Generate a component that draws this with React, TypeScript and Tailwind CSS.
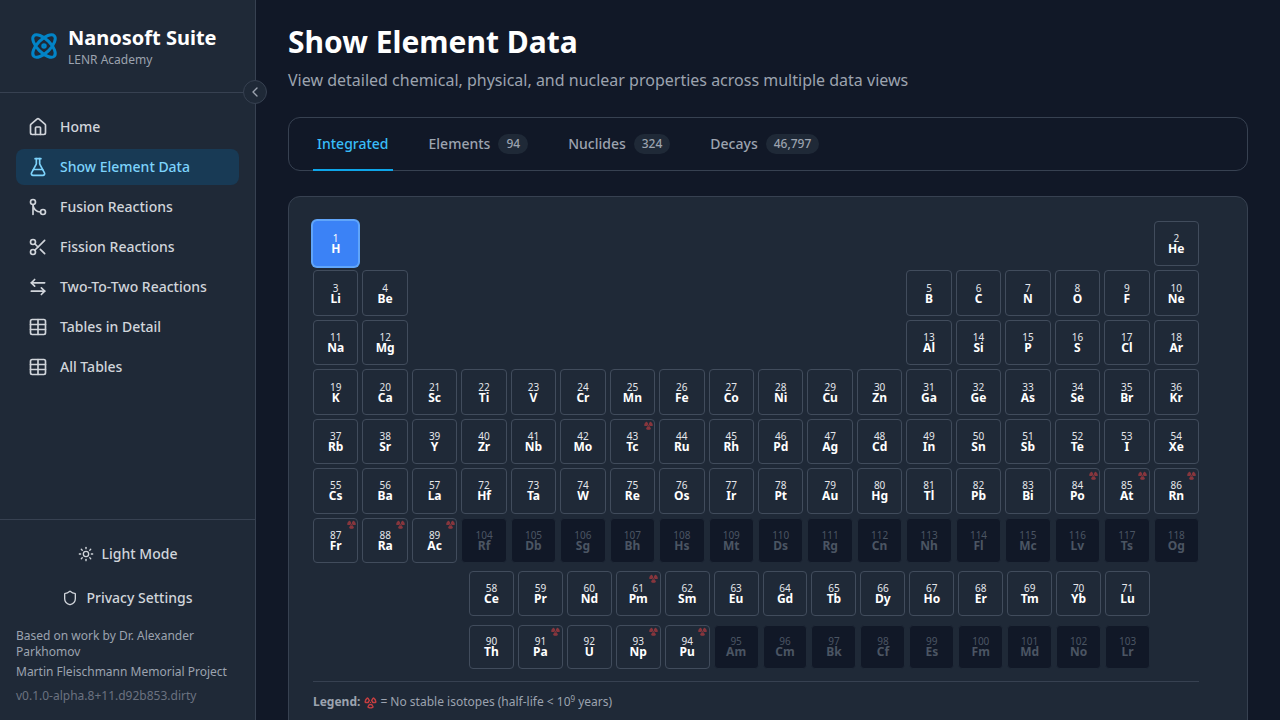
import { ChevronLeft, FlaskConical, GitMerge, House, ArrowLeftRight, Radiation, Scissors, Shield, Sun, Table, Atom } from "lucide-react";
import type { ReactNode } from "react";

const NAV = [
  { label: "Home", icon: House },
  { label: "Show Element Data", icon: FlaskConical, active: true },
  { label: "Fusion Reactions", icon: GitMerge },
  { label: "Fission Reactions", icon: Scissors },
  { label: "Two-To-Two Reactions", icon: ArrowLeftRight },
  { label: "Tables in Detail", icon: Table },
  { label: "All Tables", icon: Table },
];

const RADIOACTIVE = [43, 61, 84, 85, 86, 87, 88, 89, 91, 93, 94];

const SYMBOLS = "H He Li Be B C N O F Ne Na Mg Al Si P S Cl Ar K Ca Sc Ti V Cr Mn Fe Co Ni Cu Zn Ga Ge As Se Br Kr Rb Sr Y Zr Nb Mo Tc Ru Rh Pd Ag Cd In Sn Sb Te I Xe Cs Ba La Ce Pr Nd Pm Sm Eu Gd Tb Dy Ho Er Tm Yb Lu Hf Ta W Re Os Ir Pt Au Hg Tl Pb Bi Po At Rn Fr Ra Ac Th Pa U Np Pu Am Cm Bk Cf Es Fm Md No Lr Rf Db Sg Bh Hs Mt Ds Rg Cn Nh Fl Mc Lv Ts Og".split(" ");

function range(from: number, to: number) {
  const out: number[] = [];
  for (let i = from; i <= to; i++) out.push(i);
  return out;
}

function Cell({ z }: { z: number }) {
  const selected = z === 1;
  const missing = z >= 95;
  let cls = "border border-[#414c5c] text-white";
  if (selected) cls = "border border-[#3b82f6] bg-[#3b82f6] text-white ring-2 ring-[#60a5fa]";
  if (missing) cls = "border border-[#1f2937] bg-[#111827] text-[#4b5563]";
  return (
    <div className={`relative flex h-full w-full flex-col items-center justify-center rounded-[4px] ${cls}`}>
      {RADIOACTIVE.includes(z) && (
        <Radiation size={9} strokeWidth={3} fill="currentColor" className="absolute right-[1.5px] top-[1.5px] text-[#ef4444] opacity-50" />
      )}
      <span className={`text-[10px] leading-[10px] ${missing ? "" : "text-[#e5e7eb]"} ${selected ? "text-white" : ""}`}>{z}</span>
      <span className="text-[12px] font-bold leading-[11px]">{SYMBOLS[z - 1]}</span>
    </div>
  );
}

function MainRow({ items }: { items: (number | null)[] }) {
  return (
    <div className="grid h-[45.44px] grid-cols-18 gap-x-[4px]">
      {items.map((z, i) => (z ? <Cell key={z} z={z} /> : <div key={`e${i}`} />))}
    </div>
  );
}

function blanks(n: number): null[] {
  return new Array(n).fill(null);
}

function FooterButton({ children }: { children: ReactNode }) {
  return <div className="flex h-[36px] items-center justify-center gap-2 text-sm font-medium text-[#d1d5db]">{children}</div>;
}

export default function App() {
  return (
    <div className="flex h-screen overflow-hidden bg-[#111827] font-['Noto_Sans',sans-serif]">
      {/* sidebar */}
      <aside className="relative flex w-[256px] shrink-0 flex-col border-r border-[#374151] bg-[#1f2937]">
        <div className="flex h-[93px] items-center gap-[9px] border-b border-[#374151] px-[29px]">
          <Atom size={30} strokeWidth={2.4} className="shrink-0 text-[#0284c7]" />
          <div>
            <div className="text-xl font-bold leading-[26px] text-white">Nanosoft Suite</div>
            <div className="mt-[1px] text-xs leading-[16px] text-[#9ca3af]">LENR Academy</div>
          </div>
        </div>
        <button className="absolute left-[243px] top-[80px] flex h-[24px] w-[24px] items-center justify-center rounded-full border border-[#374151] bg-[#1f2937] text-[#9ca3af]">
          <ChevronLeft size={16} />
        </button>
        <nav className="flex flex-1 flex-col gap-1 px-4 pt-4">
          {NAV.map(item => {
            const Icon = item.icon;
            return (
              <div
                key={item.label}
                className={`flex h-[36px] items-center gap-3 rounded-lg px-3 text-sm font-medium ${item.active ? "bg-[#183a55] text-[#7dd3fc]" : "text-[#d1d5db]"}`}
              >
                <Icon size={20} />
                <span>{item.label}</span>
              </div>
            );
          })}
        </nav>
        <div className="flex flex-col gap-2 border-t border-[#374151] px-4 pb-[16px] pt-4">
          <FooterButton>
            <Sun size={16} />
            <span>Light Mode</span>
          </FooterButton>
          <FooterButton>
            <Shield size={16} />
            <span>Privacy Settings</span>
          </FooterButton>
          <div className="pt-[4px] text-xs leading-[16px] text-[#9ca3af]">
            <p>Based on work by Dr. Alexander Parkhomov</p>
            <p className="mt-1">Martin Fleischmann Memorial Project</p>
            <p className="mt-2 text-[#6b7280]">v0.1.0-alpha.8+11.d92b853.dirty</p>
          </div>
        </div>
      </aside>

      {/* main */}
      <main className="min-w-0 flex-1 overflow-hidden px-8 pt-[22px]">
        <h1 className="text-[30px] font-bold leading-[40px] text-white">Show Element Data</h1>
        <p className="mt-[6px] text-base leading-[24px] text-[#9ca3af]">
          View detailed chemical, physical, and nuclear properties across multiple data views
        </p>

        <div className="mt-[25px] flex h-[54px] gap-8 rounded-xl border border-[#374151] px-6">
          <div className="flex h-[53px] items-center border-b-2 border-[#0ea5e9] px-1 text-sm font-medium text-[#38bdf8]">Integrated</div>
          {[
            ["Elements", "94"],
            ["Nuclides", "324"],
            ["Decays", "46,797"],
          ].map(([label, count]) => (
            <div key={label} className="flex h-[53px] items-center gap-2 border-b-2 border-transparent px-1 text-sm font-medium text-[#9ca3af]">
              <span>{label}</span>
              <span className="rounded-full bg-[#1f2937] px-2 py-[2px] text-xs leading-[16px]">{count}</span>
            </div>
          ))}
        </div>

        <div className="mt-[25px] rounded-xl border border-[#374151] bg-[#1f2937] px-6 pb-6 pt-[24px]">
          <div className="flex w-[886px] flex-col gap-y-[4px]">
            <MainRow items={[1, ...blanks(16), 2]} />
            <MainRow items={[3, 4, ...blanks(10), ...range(5, 10)]} />
            <MainRow items={[11, 12, ...blanks(10), ...range(13, 18)]} />
            <MainRow items={range(19, 36)} />
            <MainRow items={range(37, 54)} />
            <MainRow items={[55, 56, 57, ...range(72, 86)]} />
            <MainRow items={[87, 88, 89, ...range(104, 118)]} />
          </div>
          <div className="ml-[156px] mt-[8px] grid h-[98px] w-[681px] grid-cols-14 grid-rows-2 gap-x-[4px] gap-y-[9px]">
            {range(58, 71).map(z => <Cell key={z} z={z} />)}
            {range(90, 103).map(z => <Cell key={z} z={z} />)}
          </div>
          <div className="mt-[12px] flex w-[886px] items-center gap-[3.5px] border-t border-[#374151] pt-[12px] text-xs leading-[16px] text-[#9ca3af]">
            <span className="font-bold">Legend:</span>
            <Radiation size={13} strokeWidth={2.5} className="text-[#ef4444] opacity-80" />
            <span>= No stable isotopes (half-life &lt; 10<sup className="text-[8px]">9</sup> years)</span>
          </div>
        </div>
      </main>
    </div>
  );
}
